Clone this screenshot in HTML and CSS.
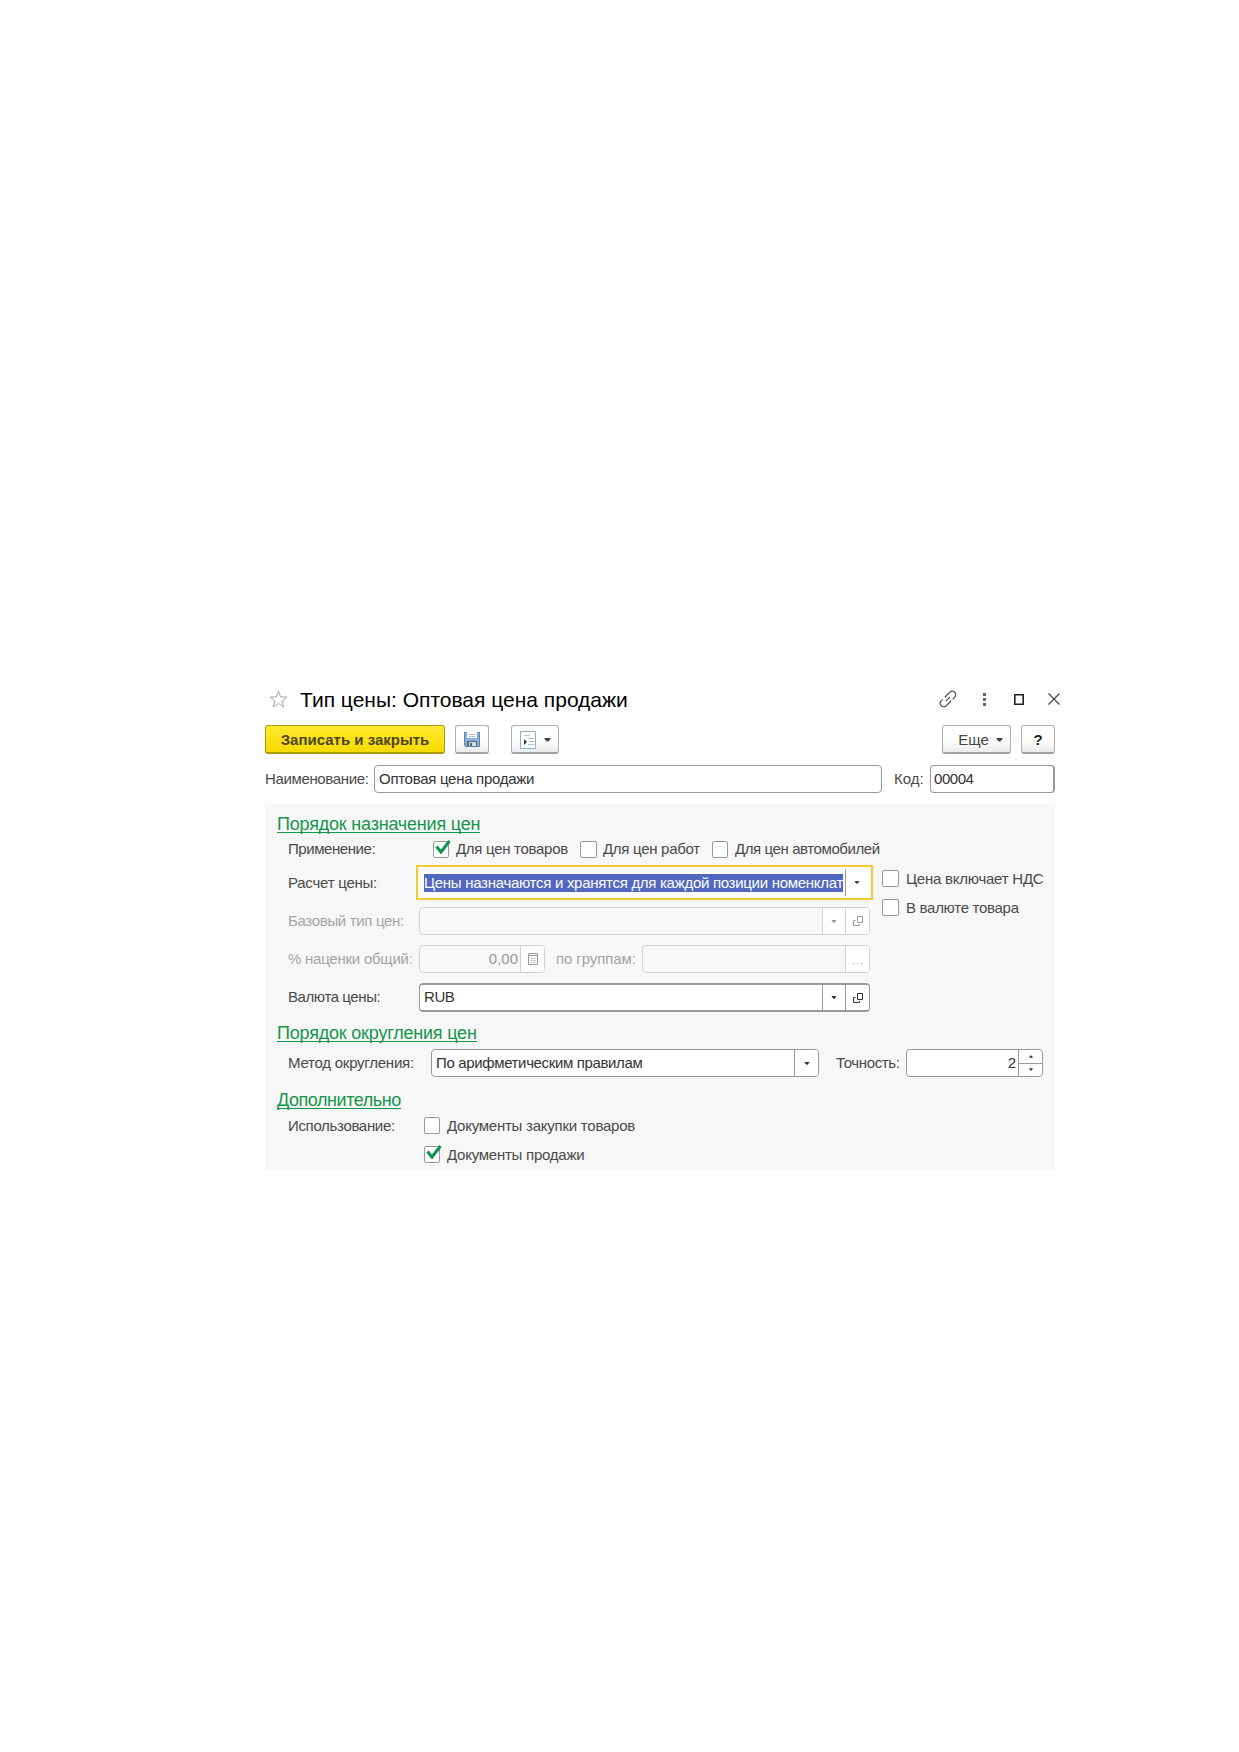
FILE: index.html
```html
<!DOCTYPE html>
<html lang="ru">
<head>
<meta charset="utf-8">
<title>Тип цены</title>
<link rel="stylesheet" href="styles.css">
</head>
<body>
<svg class="defs" aria-hidden="true">
  <symbol id="down" viewBox="0 0 7 4"><path d="M0.5 0h6v1L4.3 3.6h-1.6L0.5 1z"/></symbol>
  <symbol id="up" viewBox="0 0 7 4"><path d="M0.5 4h6V3L4.3 .4h-1.6L0.5 3z"/></symbol>
  <symbol id="open" viewBox="0 0 10 10"><path fill="none" stroke="currentColor" d="M4.500.5h5v6h-5zM2.500 4.500h-2v5h6v-1.500"/></symbol>
  <symbol id="check" viewBox="0 0 16 16"><path fill="none" stroke="#0d9550" stroke-width="3" d="M1.500 6.500L6 12 14.500 1"/></symbol>
</svg>
<main class="window">
  <header class="titlebar">
    <svg class="star" viewBox="0 0 19 18"><path fill="none" stroke="#a5a8ac" d="M9.500 1l2.200 5.900 6.300.2-5 3.900 1.800 6-5.300-3.500L4.200 17 6 11 1 7.100l6.300-.2z"/></svg>
    <h1><span class="t">Тип цены: Оптовая цена продажи</span></h1>
    <svg class="link" viewBox="0 0 18 18"><g fill="none" stroke="#555" stroke-width="1.200" transform="rotate(-45 9 9)"><path d="M8 5.500H15a3.500 3.500 0 0 1 0 7H12M10 12.500H3a3.500 3.500 0 0 1 0-7H5M6 9h6"/></g></svg>
    <svg class="dots" viewBox="0 0 3 13"><path fill="#666" d="M0 0h3v3H0zM0 5h3v3H0zM0 10h3v3H0z"/></svg>
    <svg class="max" viewBox="0 0 10 11"><path fill="none" stroke="#222" stroke-width="1.600" d="M.8.8h8.400v9.400H.8z"/></svg>
    <svg class="close" viewBox="0 0 12 12"><path fill="none" stroke="#444" stroke-width="1.200" d="M.5.5l11 11M11.500.5l-11 11"/></svg>
  </header>

  <div class="toolbar">
    <button class="btn primary"><span class="t">Записать и закрыть</span></button>
    <button class="btn disk">
      <svg width="16" height="15" viewBox="0 0 16 15"><path fill="#86afdd" stroke="#5b84b3" d="M.5.5h15v14h-14l-1-1z"/><path fill="#fff" d="M3 0h10v6H3z"/><path fill="#a9bfdc" d="M5 2h6v1H5zM5 4h6v1H5z"/><path fill="#5c6670" d="M3 9h10v5H3z"/><path fill="#d9dcdf" d="M5 10h7v4H5z"/><path fill="#5c6670" d="M6 11h2v3H6z"/></svg>
    </button>
    <button class="btn report">
      <svg width="16" height="18" viewBox="0 0 16 18"><path fill="#fff" stroke="#8fb0c9" d="M.5.5h15v17H.5z"/><path fill="#a9c4dc" d="M4 4h6v1H4zM8 7h6v1H8zM9 10h5v1H9zM8 13h6v1H8z"/><path fill="#333" d="M4 8l3 3-3 3z"/></svg>
      <svg class="ar big"><use href="#down"/></svg>
    </button>
    <button class="btn more"><span class="t">Еще</span><svg class="ar big"><use href="#down"/></svg></button>
    <button class="btn help"><span class="t">?</span></button>
  </div>

  <div class="row names">
    <label class="lb-name"><span class="t s36">Наименование:</span></label>
    <div class="field f-name"><span class="t s28">Оптовая цена продажи</span></div>
    <label class="lb-code"><span class="t">Код:</span></label>
    <div class="field f-code"><span class="t s44">00004</span></div>
  </div>

  <section class="panel">
    <h2 class="h-one"><span class="t s20">Порядок назначения цен</span></h2>
    <div class="checks">
      <label class="lb-use"><span class="t s44">Применение:</span></label>
      <i class="box"><svg><use href="#check"/></svg></i><label class="c1"><span class="t s28">Для цен товаров</span></label>
      <i class="box wider"></i><label class="c2"><span class="t s28">Для цен работ</span></label>
      <i class="box"></i><label><span class="t s40">Для цен автомобилей</span></label>
    </div>
    <div class="pricing">
      <div class="fields">
        <div class="row calc">
          <label class="lb-calc"><span class="t s24">Расчет цены:</span></label>
          <div class="focus"><div class="sel"><span class="t">Цены назначаются и хранятся для каждой позиции номенклат</span></div><b class="cell"><svg class="ar"><use href="#down"/></svg></b></div>
        </div>
        <div class="row off base">
          <label class="lb"><span class="t s32">Базовый тип цен:</span></label>
          <div class="field wide"><span class="val"></span><b class="cell"><svg class="ar"><use href="#down"/></svg></b><b class="cell last"><svg class="op"><use href="#open"/></svg></b></div>
        </div>
        <div class="row off markup">
          <label class="lb"><span class="t s24">% наценки общий:</span></label>
          <div class="field f-pct"><span class="val right"><span class="t">0,00</span></span><b class="cell last"><svg width="10" height="12" viewBox="0 0 10 12"><path fill="none" stroke="currentColor" d="M.5.5h9v11h-9zM.5 2.500h9"/><path stroke="currentColor" stroke-dasharray="1 1" d="M2.500 5.500h5M2.500 7.500h5M2.500 9.500h5"/></svg></b></div>
          <label class="lb-grp"><span class="t s10">по группам:</span></label>
          <div class="field f-grp"><span class="val"></span><b class="cell last"><svg class="dots3" viewBox="0 0 9 1"><path fill="currentColor" d="M0 0h1v1H0zM4 0h1v1H4zM8 0h1v1H8z"/></svg></b></div>
        </div>
        <div class="row cur">
          <label class="lb"><span class="t s40">Валюта цены:</span></label>
          <div class="field wide thick"><span class="val"><span class="t s44">RUB</span></span><b class="cell"><svg class="ar"><use href="#down"/></svg></b><b class="cell last"><svg class="op"><use href="#open"/></svg></b></div>
        </div>
      </div>
      <div class="flags">
        <div class="flag"><i class="box wider"></i><label><span class="t s24">Цена включает НДС</span></label></div>
        <div class="flag"><i class="box wider"></i><label><span class="t s28">В валюте товара</span></label></div>
      </div>
    </div>
    <h2 class="h-two"><span class="t s20">Порядок округления цен</span></h2>
    <div class="row round">
      <label class="lb-meth"><span class="t s24">Метод округления:</span></label>
      <div class="field f-meth"><span class="val"><span class="t s36">По арифметическим правилам</span></span><b class="cell last"><svg class="ar"><use href="#down"/></svg></b></div>
      <label class="lb-prec"><span class="t s36">Точность:</span></label>
      <div class="field f-prec"><span class="val right"><span class="t">2</span></span><b class="spin"><i><svg class="ar small"><use href="#up"/></svg></i><i><svg class="ar small"><use href="#down"/></svg></i></b></div>
    </div>
    <h2 class="h-three"><span class="t s44">Дополнительно</span></h2>
    <div class="usage">
      <label class="lb-usage"><span class="t s32">Использование:</span></label>
      <div class="list">
        <div class="flag"><i class="box"></i><label><span class="t s24">Документы закупки товаров</span></label></div>
        <div class="flag"><i class="box"><svg><use href="#check"/></svg></i><label><span class="t s24">Документы продажи</span></label></div>
      </div>
    </div>
  </section>
</main>
</body>
</html>
```
FILE: styles.css
```css
* { box-sizing: border-box; }
body { margin: 0; background: #fff; color: #4a4a4a; font: 15px/18px "Liberation Sans", Arial, sans-serif; }
.defs { position: absolute; width: 0; height: 0; }
.t { white-space: nowrap; }
.s10 { letter-spacing: -0.1px; }
.s20 { letter-spacing: -0.2px; }
.s24 { letter-spacing: -0.24px; }
.s28 { letter-spacing: -0.29px; }
.s32 { letter-spacing: -0.33px; }
.s36 { letter-spacing: -0.36px; }
.s40 { letter-spacing: -0.41px; }
.s44 { letter-spacing: -0.44px; }
svg { display: block; flex: none; }
label, .field, .btn, .box, .cell, .focus { flex: none; }
h1, h2 { margin: 0; font-weight: 400; }
.window { width: 797px; margin: 684px 0 0 265px; }

.titlebar { display: flex; align-items: center; height: 31px; }
.star { width: 19px; height: 18px; margin: -1px 0 0 4px; }
h1 { width: 639px; margin-left: 12px; font-size: 21px; line-height: 24px; color: #000; }
.link { width: 18px; height: 18px; margin-top: -2px; }
.dots { width: 3px; height: 13px; margin-left: 26px; }
.max { width: 10px; height: 11px; margin-left: 28px; }
.close { width: 12px; height: 12px; margin: -1px 0 0 24px; }

.toolbar { display: flex; width: 790px; height: 29px; margin-top: 10px; }
.btn { display: flex; align-items: center; justify-content: center; height: 29px; padding: 1px 0 0; border: 1px solid #b0b0b0; border-bottom: 2px solid #a3a3a3; border-radius: 3px; background: linear-gradient(#fff 50%, #ececec); color: #444; font: inherit; }
.primary { width: 180px; border-color: #b09a10; background: linear-gradient(#ffe92e, #f7da00); color: #4d4622; font-weight: 700; }
.disk { width: 34px; margin-left: 10px; }
.report { width: 48px; margin-left: 22px; gap: 8px; }
.more { width: 69px; margin-left: auto; gap: 7px; padding-left: 8px; }
.help { width: 34px; margin-left: 10px; color: #222; font-weight: 700; }
.ar { width: 6px; height: 3px; fill: currentColor; }
.ar.big { width: 7px; height: 4px; margin-top: 1px; }
.ar.small { width: 4px; height: 3px; }
.op { width: 10px; height: 10px; }

.row { display: flex; align-items: center; height: 28px; }
.names { margin-top: 11px; }
.field { display: flex; align-items: center; height: 28px; border: 1px solid #999; border-radius: 4px; background: #fff; color: #333; overflow: hidden; }
.f-name { width: 508px; padding-left: 4px; }
.f-code { width: 125px; padding-left: 3px; border-right-width: 2px; }
.lb-name { width: 109px; }
.lb-code { width: 36px; margin-left: 12px; }

.panel { width: 790px; height: 365px; margin-top: 11px; padding: 10px 0 0 12px; background: #f7f7f7; }
h2 { height: 20px; font-size: 18px; line-height: 20px; color: #149649; }
h2 .t { display: inline-block; height: 19px; border-bottom: 1px solid #149649; }
.checks { display: flex; align-items: center; height: 17px; margin: 7px 0 0 11px; }
.checks label { margin-top: -2px; }
.box { width: 16px; height: 17px; margin-right: 7px; border: 1px solid #999; border-radius: 2px; background: #fff; }
.box.wider { width: 17px; }
.box svg { width: 16px; height: 16px; margin: -2px 0 0 1px; overflow: visible; }
.lb-use { width: 145px; }
.c1 { width: 124px; }
.c2 { width: 108px; }
.c2 .t { margin-left: -1px; }
.pricing { display: flex; margin: 7px 0 0 11px; }
.fields { width: 594px; }
.lb { width: 131px; }
.calc { height: 36px; align-items: flex-start; }
.lb-calc { width: 128px; padding-top: 9px; }
.focus { display: flex; align-items: center; width: 457px; height: 35px; padding-left: 6px; border: 2px solid #f5cb32; background: #fff; }
.sel { width: 419px; height: 18px; overflow: hidden; background: #5168c0; color: #fff; }
.sel .t { letter-spacing: -0.29px; }
.focus .cell { width: 23px; height: 26px; margin-left: 2px; }
.cell { display: flex; align-items: center; justify-content: center; width: 23px; height: 100%; border-left: 1px solid #999; background: #fff; }
.cell.last { width: 24px; }
.val { flex: 1; padding-left: 4px; }
.val.right { padding: 0 2px 0 0; text-align: right; }
.wide { width: 451px; }
.base { margin-top: 6px; }
.markup { margin-top: 10px; }
.cur { height: 29px; margin-top: 10px; }
.cur .t { position: relative; top: -1px; }
.thick { height: 29px; border-width: 2px 1px; }
.off { color: #a5a5a5; }
.off .field { border-color: #d2d2d2; background: transparent; color: #999; }
.off .cell { border-color: #d2d2d2; }
.f-pct { width: 126px; }
.lb-grp { width: 86px; margin-left: 11px; }
.f-grp { width: 228px; }
.dots3 { width: 9px; height: 1px; margin-top: 9px; }
.flags { display: grid; gap: 12px; align-content: start; padding-top: 5px; }
.flag { display: flex; align-items: center; height: 17px; }
.h-two { margin-top: 11px; }
.round { margin: 6px 0 0 11px; }
.lb-meth { width: 143px; }
.f-meth { width: 388px; }
.lb-prec { width: 70px; margin-left: 17px; }
.f-prec { width: 137px; }
.spin { display: flex; flex-direction: column; width: 24px; height: 100%; border-left: 1px solid #999; }
.spin i { display: flex; flex: 1; align-items: center; justify-content: center; }
.spin i + i { border-top: 1px solid #999; }
.h-three { margin-top: 13px; }
.usage { display: flex; margin: 7px 0 0 11px; }
.lb-usage { width: 136px; }
.list { display: grid; gap: 12px; }
```
